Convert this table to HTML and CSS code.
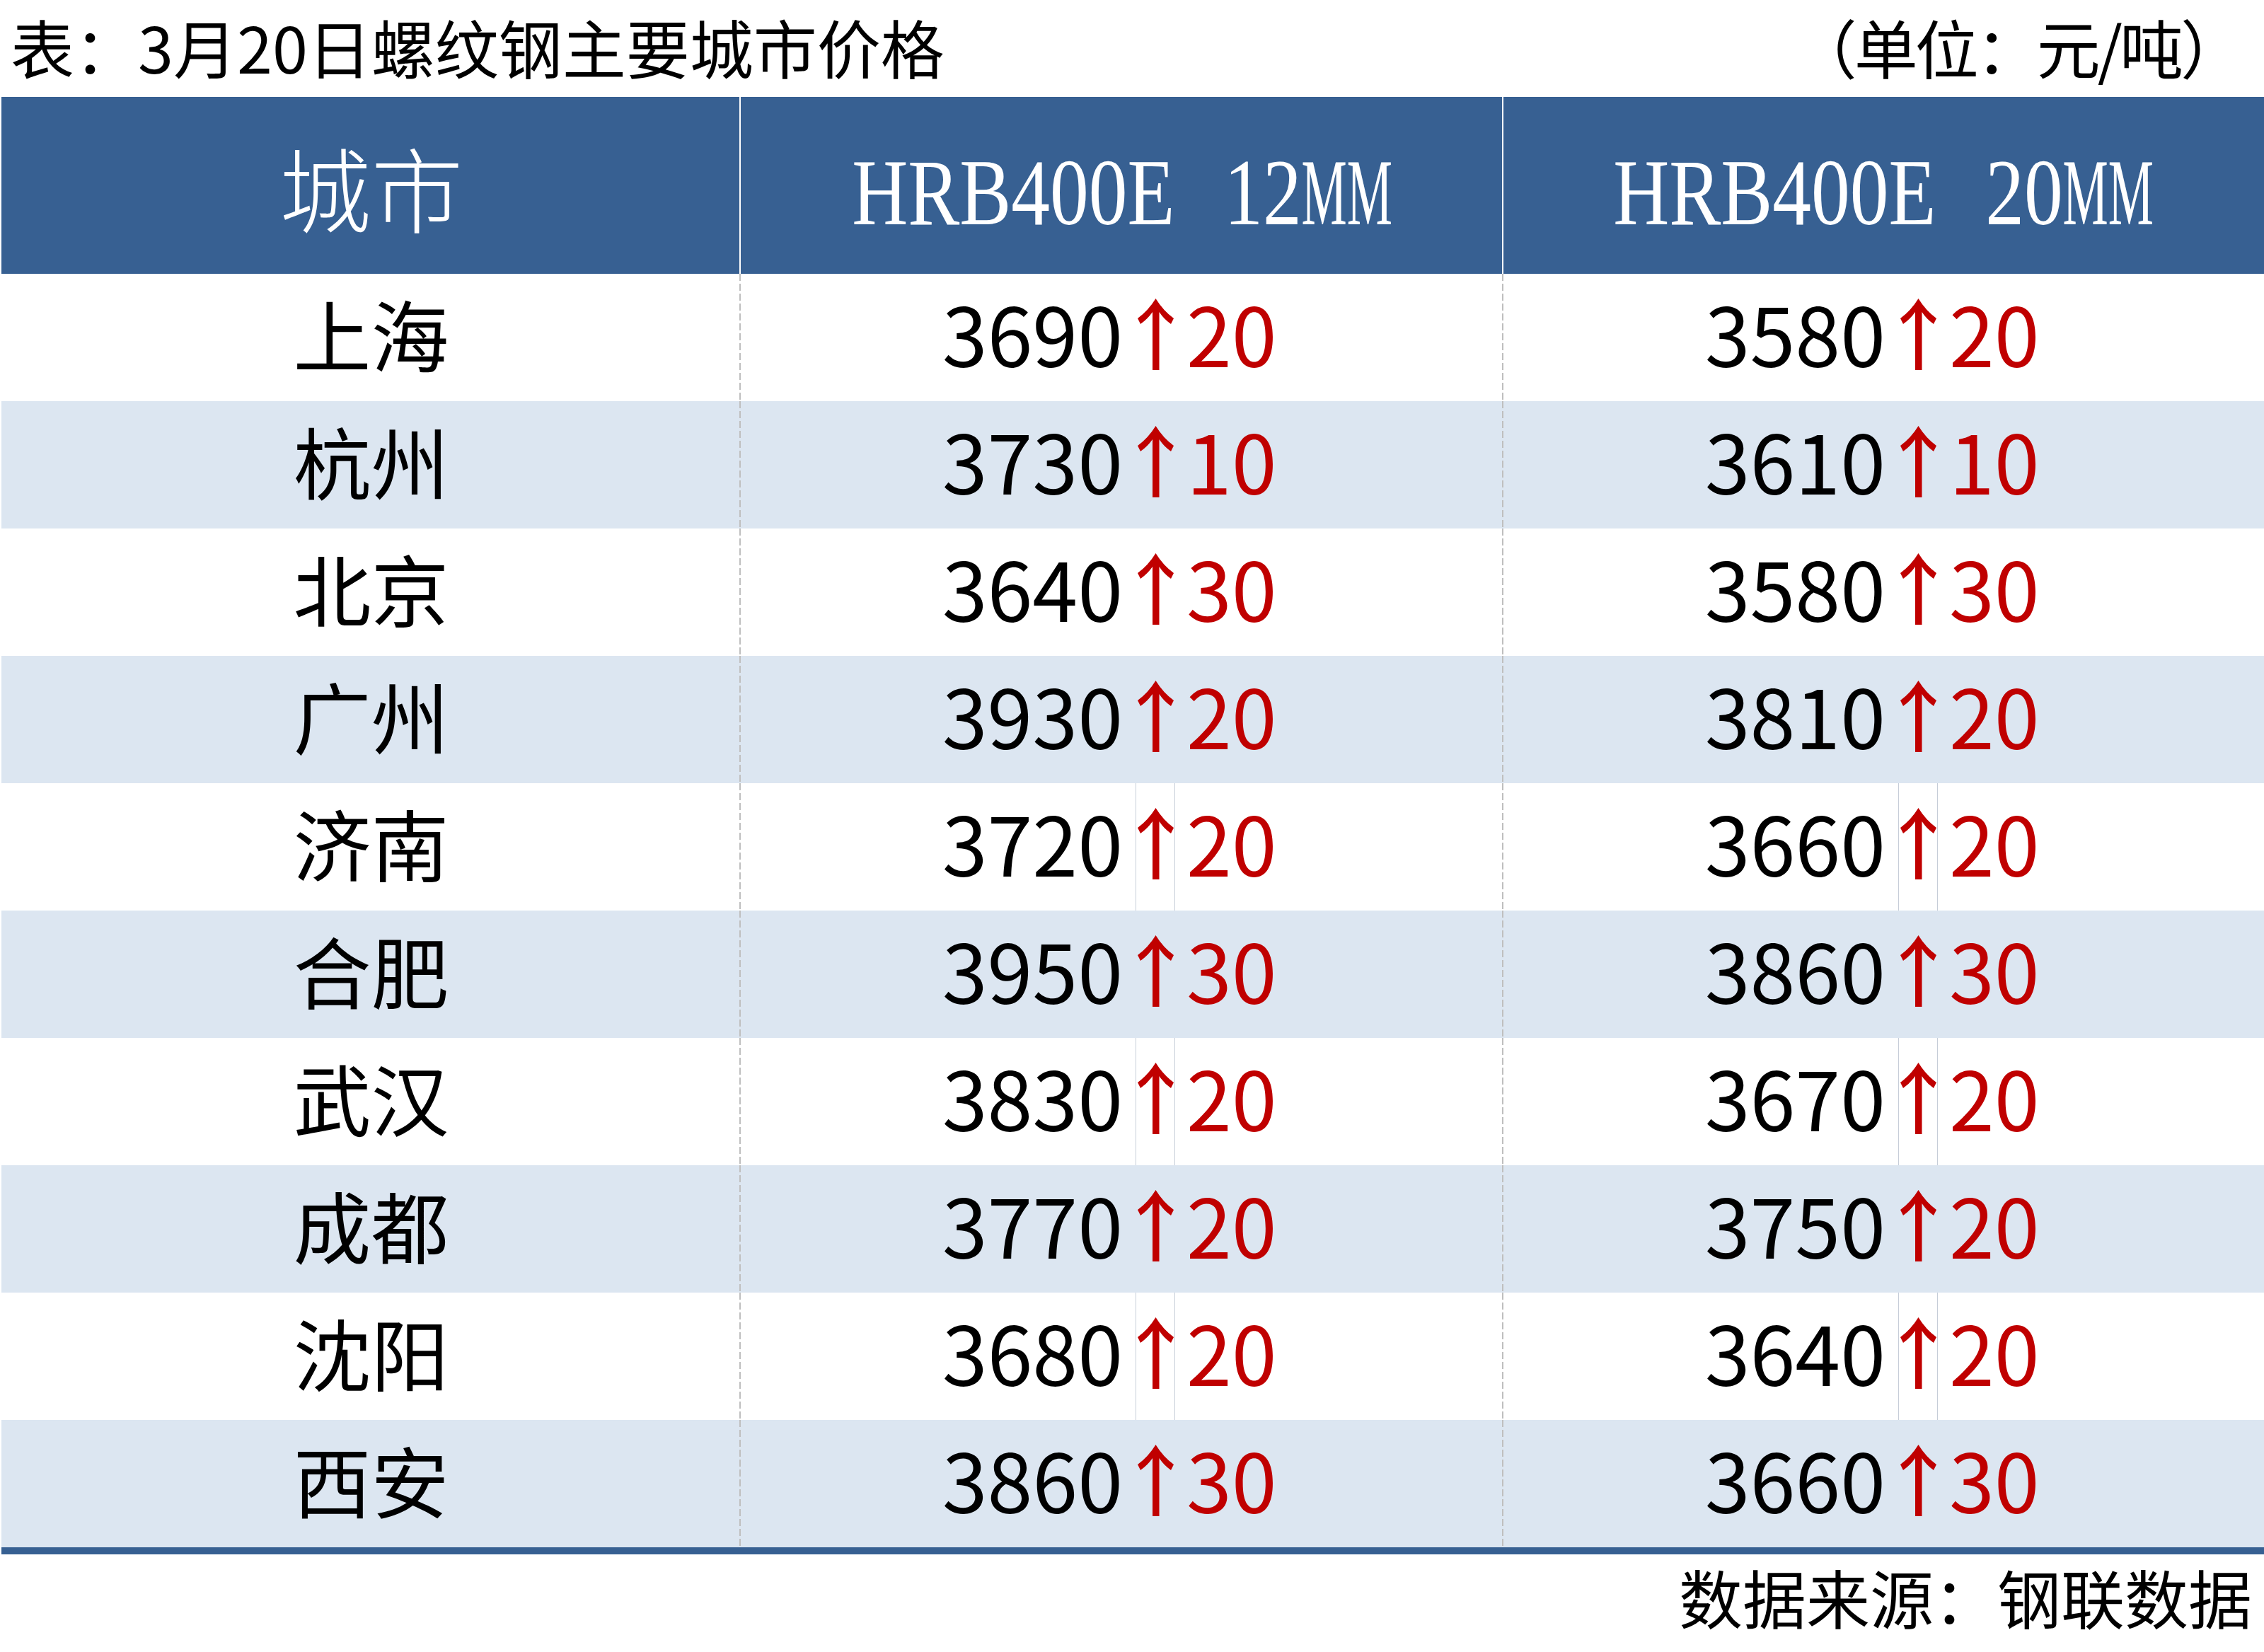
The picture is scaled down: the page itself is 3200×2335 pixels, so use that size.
FILE: index.html
```html
<!DOCTYPE html>
<html lang="zh-CN">
<head>
<meta charset="utf-8">
<title>螺纹钢主要城市价格</title>
<link rel="stylesheet" href="styles.css">
</head>
<body>
<svg class="defs" width="0" height="0" aria-hidden="true">
  <symbol id="up" viewBox="0 0 51 101">
    <path d="M25.5 0 Q15 17 0 28 L4 36 Q14 29 21 19 L21 101 L30.5 101 L30.5 19 Q37 29 47 36 L51 28 Q36 17 25.5 0 Z"/>
  </symbol>
</svg>
<div class="page">
  <div class="title-row">
    <span class="title">表：3月20日螺纹钢主要城市价格</span>
    <span class="unit">（单位：元/吨）</span>
  </div>
  <div class="table">
    <div class="thead">
      <div class="th th-city div-white">城市</div>
      <div class="th th-spec div-white"><span class="spec">HRB400E<span class="gap"> </span>12<span class="mm">MM</span></span></div>
      <div class="th th-spec"><span class="spec">HRB400E<span class="gap"> </span>20<span class="mm">MM</span></span></div>
    </div>

    <div class="tr">
      <div class="city div-dash">上海</div>
      <div class="price div-dash"><span class="num">3690</span><span class="arrow"><svg class="up"><use href="#up"/></svg></span><span class="chg">20</span></div>
      <div class="price"><span class="num">3580</span><span class="arrow"><svg class="up"><use href="#up"/></svg></span><span class="chg">20</span></div>
    </div>
    <div class="tr">
      <div class="city div-dash">杭州</div>
      <div class="price div-dash"><span class="num">3730</span><span class="arrow"><svg class="up"><use href="#up"/></svg></span><span class="chg">10</span></div>
      <div class="price"><span class="num">3610</span><span class="arrow"><svg class="up"><use href="#up"/></svg></span><span class="chg">10</span></div>
    </div>
    <div class="tr">
      <div class="city div-dash">北京</div>
      <div class="price div-dash"><span class="num">3640</span><span class="arrow"><svg class="up"><use href="#up"/></svg></span><span class="chg">30</span></div>
      <div class="price"><span class="num">3580</span><span class="arrow"><svg class="up"><use href="#up"/></svg></span><span class="chg">30</span></div>
    </div>
    <div class="tr">
      <div class="city div-dash">广州</div>
      <div class="price div-dash"><span class="num">3930</span><span class="arrow"><svg class="up"><use href="#up"/></svg></span><span class="chg">20</span></div>
      <div class="price"><span class="num">3810</span><span class="arrow"><svg class="up"><use href="#up"/></svg></span><span class="chg">20</span></div>
    </div>
    <div class="tr ruled">
      <div class="city div-dash">济南</div>
      <div class="price div-dash"><span class="num">3720</span><span class="arrow"><svg class="up"><use href="#up"/></svg></span><span class="chg">20</span></div>
      <div class="price"><span class="num">3660</span><span class="arrow"><svg class="up"><use href="#up"/></svg></span><span class="chg">20</span></div>
    </div>
    <div class="tr">
      <div class="city div-dash">合肥</div>
      <div class="price div-dash"><span class="num">3950</span><span class="arrow"><svg class="up"><use href="#up"/></svg></span><span class="chg">30</span></div>
      <div class="price"><span class="num">3860</span><span class="arrow"><svg class="up"><use href="#up"/></svg></span><span class="chg">30</span></div>
    </div>
    <div class="tr ruled">
      <div class="city div-dash">武汉</div>
      <div class="price div-dash"><span class="num">3830</span><span class="arrow"><svg class="up"><use href="#up"/></svg></span><span class="chg">20</span></div>
      <div class="price"><span class="num">3670</span><span class="arrow"><svg class="up"><use href="#up"/></svg></span><span class="chg">20</span></div>
    </div>
    <div class="tr">
      <div class="city div-dash">成都</div>
      <div class="price div-dash"><span class="num">3770</span><span class="arrow"><svg class="up"><use href="#up"/></svg></span><span class="chg">20</span></div>
      <div class="price"><span class="num">3750</span><span class="arrow"><svg class="up"><use href="#up"/></svg></span><span class="chg">20</span></div>
    </div>
    <div class="tr ruled">
      <div class="city div-dash">沈阳</div>
      <div class="price div-dash"><span class="num">3680</span><span class="arrow"><svg class="up"><use href="#up"/></svg></span><span class="chg">20</span></div>
      <div class="price"><span class="num">3640</span><span class="arrow"><svg class="up"><use href="#up"/></svg></span><span class="chg">20</span></div>
    </div>
    <div class="tr">
      <div class="city div-dash">西安</div>
      <div class="price div-dash"><span class="num">3860</span><span class="arrow"><svg class="up"><use href="#up"/></svg></span><span class="chg">30</span></div>
      <div class="price"><span class="num">3660</span><span class="arrow"><svg class="up"><use href="#up"/></svg></span><span class="chg">30</span></div>
    </div>
  </div>
  <div class="source">数据来源：钢联数据</div>
</div>
</body>
</html>
```

FILE: styles.css
```css
html, body {
  margin: 0;
  padding: 0;
  background: #ffffff;
}

body {
  font-family: "Noto Sans CJK SC", "Noto Sans", sans-serif;
  color: #000000;
}

.defs {
  display: block;
  width: 0;
  height: 0;
  overflow: hidden;
}

.page {
  width: 3200px;
  height: 2335px;
  display: flex;
  flex-direction: column;
}

/* Title line */
.title-row {
  height: 137px;
  flex: none;
  display: flex;
  align-items: center;
  justify-content: space-between;
  padding: 0 32px 8px 15px;
  font-size: 90px;
  line-height: 1;
  box-sizing: border-box;
}

.title,
.unit {
  white-space: nowrap;
}

.unit {
  letter-spacing: -4px;
}

/* Table */
.table {
  flex: none;
  margin-left: 2px;
  display: flex;
  flex-direction: column;
  border-bottom: 10px solid #376092;
}

.thead,
.tr {
  display: grid;
  grid-template-columns: 1045px 1078px 1fr;
}

.thead {
  height: 250px;
  background: #376092;
}

.th {
  display: flex;
  align-items: center;
  justify-content: center;
  color: #ffffff;
  line-height: 1;
  box-sizing: border-box;
}

.th-city {
  font-size: 130px;
  font-weight: 300;
}

.th-spec {
  font-family: "Liberation Serif", serif;
  font-size: 133px;
  padding-top: 20px;
}

.spec {
  display: inline-block;
  white-space: nowrap;
  transform: scaleX(0.823);
}

.gap {
  display: inline-block;
  width: 0.64em;
}

.mm {
  display: inline-block;
  transform: scaleX(0.66);
  transform-origin: left center;
  margin-right: -80px;
}

.div-white {
  background-image: linear-gradient(#ffffff, #ffffff);
  background-size: 2px 100%;
  background-position: right top;
  background-repeat: no-repeat;
}

.tr {
  height: 180px;
  background: #ffffff;
}

.tr:nth-child(odd) {
  background: #dce6f1;
}

.div-dash {
  background-image: repeating-linear-gradient(to bottom, #bfbfbf 0 10px, transparent 10px 14px);
  background-size: 2px 100%;
  background-position: right top;
  background-repeat: no-repeat;
}

.city {
  display: flex;
  align-items: center;
  justify-content: center;
  font-size: 110px;
  line-height: 1;
  padding-bottom: 14px;
  box-sizing: border-box;
}

.price {
  display: grid;
  grid-template-columns: 558px 56px 1fr;
  align-items: center;
  font-size: 115px;
  line-height: 1;
}

.num {
  text-align: right;
  padding-right: 18px;
  padding-bottom: 16px;
}

.arrow {
  align-self: stretch;
  display: flex;
  align-items: center;
  justify-content: center;
  padding-bottom: 10px;
  box-sizing: border-box;
}

.ruled .arrow {
  box-shadow: inset 1px 0 0 #c6cdd8, inset -1px 0 0 #c6cdd8;
}

.up {
  width: 51px;
  height: 101px;
  fill: #c00000;
  flex: none;
}

.chg {
  color: #c00000;
  padding-left: 16px;
  padding-bottom: 16px;
}

/* Source line */
.source {
  flex: 1;
  display: flex;
  align-items: center;
  justify-content: flex-end;
  padding-right: 17px;
  padding-bottom: 20px;
  font-size: 90px;
  line-height: 1;
}
```
